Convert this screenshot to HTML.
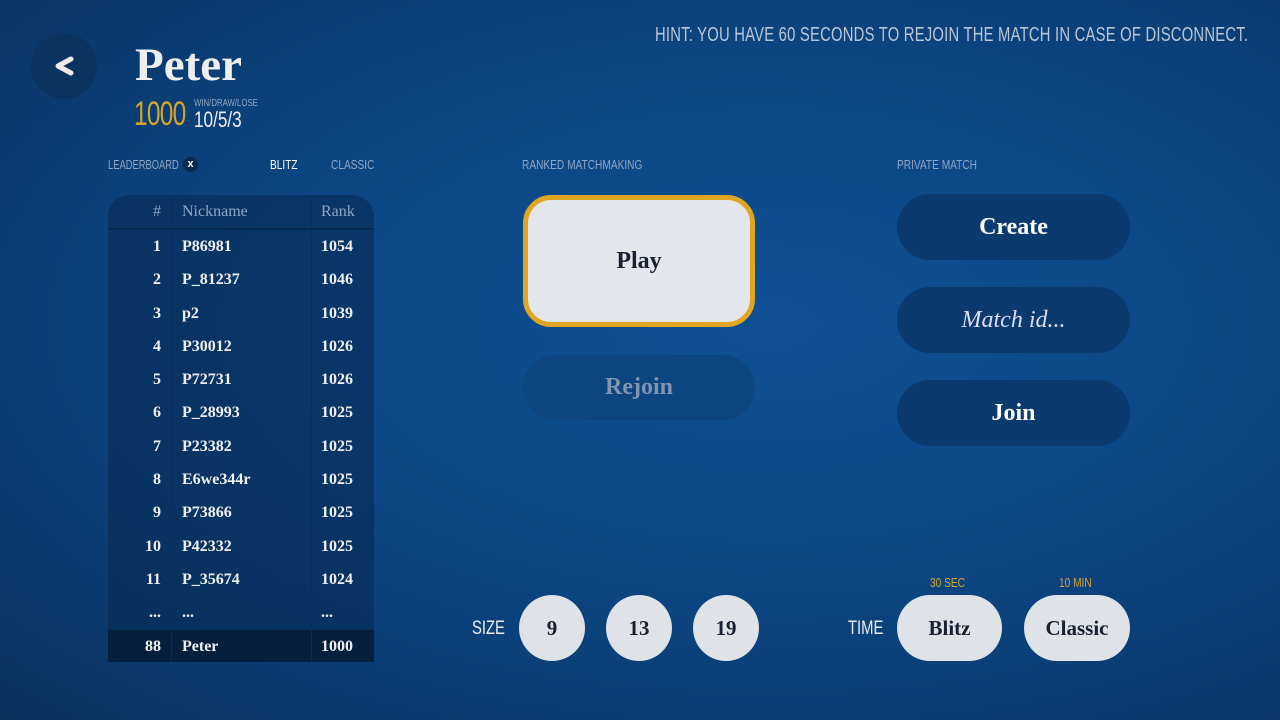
<!DOCTYPE html>
<html><head><style>
body{margin:0;width:1280px;height:720px;overflow:hidden;position:relative;
background:radial-gradient(ellipse at 60% 45%,#0f5095 0%,#0c4683 45%,#0a3a6e 80%,#08315c 100%);
font-family:"Liberation Serif",serif;color:#f0f0f0}
.a{position:absolute;white-space:nowrap}
.cond{font-family:"Liberation Sans Narrow","Liberation Sans",sans-serif;transform:scaleX(.78);transform-origin:left}
.small{font-size:13px;color:#8ea6c4}
.btn{position:absolute;border-radius:33px;background:#0a3a6e;display:flex;align-items:center;justify-content:center;font-weight:bold;font-size:24px;color:#fff}
.circ{position:absolute;width:66px;height:66px;border-radius:50%;background:#dfe3e8;color:#1a2030;display:flex;align-items:center;justify-content:center;font-weight:bold;font-size:21px;top:595px}
table{border-collapse:collapse;width:266px}
td{height:33.3px;font-weight:bold;font-size:16px;padding:0;border-left:1px solid #0a2e55}
td:first-child{border-left:none;text-align:right;padding-right:10px;width:53px}
td:nth-child(2){padding-left:10px;width:129px}
td:nth-child(3){padding-left:9px}
</style></head><body>
<div class="a" style="left:31px;top:33px;width:66px;height:66px;border-radius:50%;background:#0a335f"></div>
<svg class="a" style="left:52px;top:54px" width="24" height="24"><path d="M19 5 L6 12 L19 19" stroke="#f0eaea" stroke-width="5" fill="none" stroke-linejoin="round" stroke-linecap="round"/></svg>
<div class="a" style="left:135px;top:38px;font-size:47px;font-weight:bold;color:#eee">Peter</div>
<div class="a cond" style="left:134px;top:95px;font-size:34px;color:#d4a52a;letter-spacing:-1px;transform:scaleX(.72)">1000</div>
<div class="a cond" style="left:194px;top:98px;font-size:10px;color:#8ea6c4">WIN/DRAW/LOSE</div>
<div class="a cond" style="left:194px;top:107px;font-size:22px;color:#eee">10/5/3</div>
<div class="a cond" style="left:655px;top:24px;font-size:20px;color:#b9c6d6;letter-spacing:.3px;transform:scaleX(.74)">HINT: YOU HAVE 60 SECONDS TO REJOIN THE MATCH IN CASE OF DISCONNECT.</div>
<div class="a cond small" style="left:108px;top:157px;transform:scaleX(.72)">LEADERBOARD</div>
<div class="a" style="left:183px;top:157px;width:15px;height:15px;border-radius:50%;background:#0a2a4e;color:#fff;font:bold 11px 'Liberation Sans';text-align:center;line-height:15px">x</div>
<div class="a cond small" style="left:270px;top:157px;color:#fff">BLITZ</div>
<div class="a cond small" style="left:331px;top:157px">CLASSIC</div>
<div class="a cond small" style="left:522px;top:157px">RANKED MATCHMAKING</div>
<div class="a cond small" style="left:897px;top:157px">PRIVATE MATCH</div>
<div class="a" style="left:108px;top:195px;width:266px;height:467px;background:rgba(8,40,80,.55);border-radius:22px 22px 0 0;overflow:hidden">
<table>
<tr style="color:#8ea6c4;border-bottom:2px solid #082a50"><td style="font-weight:normal">#</td><td style="font-weight:normal">Nickname</td><td style="font-weight:normal">Rank</td></tr>
<tr><td>1</td><td>P86981</td><td>1054</td></tr>
<tr><td>2</td><td>P_81237</td><td>1046</td></tr>
<tr><td>3</td><td>p2</td><td>1039</td></tr>
<tr><td>4</td><td>P30012</td><td>1026</td></tr>
<tr><td>5</td><td>P72731</td><td>1026</td></tr>
<tr><td>6</td><td>P_28993</td><td>1025</td></tr>
<tr><td>7</td><td>P23382</td><td>1025</td></tr>
<tr><td>8</td><td>E6we344r</td><td>1025</td></tr>
<tr><td>9</td><td>P73866</td><td>1025</td></tr>
<tr><td>10</td><td>P42332</td><td>1025</td></tr>
<tr><td>11</td><td>P_35674</td><td>1024</td></tr>
<tr><td>...</td><td>...</td><td>...</td></tr>
<tr style="background:#061f3d"><td>88</td><td>Peter</td><td>1000</td></tr>
</table></div>
<div class="btn" style="left:523px;top:195px;width:222px;height:122px;border:5px solid #e0a621;border-radius:28px;background:#e3e7ec;color:#1a2030">Play</div>
<div class="btn" style="left:523px;top:355px;width:232px;height:65px;background:#0d4580;color:#7f95b0">Rejoin</div>
<div class="btn" style="left:897px;top:194px;width:233px;height:66px">Create</div>
<div class="btn" style="left:897px;top:287px;width:233px;height:66px;font-weight:normal;font-style:italic;color:#dde">Match id...</div>
<div class="btn" style="left:897px;top:380px;width:233px;height:66px">Join</div>
<div class="a cond" style="left:472px;top:618px;font-size:19px;color:#eee">SIZE</div>
<div class="circ" style="left:519px">9</div>
<div class="circ" style="left:606px">13</div>
<div class="circ" style="left:693px">19</div>
<div class="a cond" style="left:848px;top:618px;font-size:19px;color:#eee">TIME</div>
<div class="a cond" style="left:930px;top:575px;font-size:13px;color:#d4a52a">30 SEC</div>
<div class="a cond" style="left:1059px;top:575px;font-size:13px;color:#d4a52a">10 MIN</div>
<div class="circ" style="left:897px;width:105px;border-radius:33px">Blitz</div>
<div class="circ" style="left:1024px;width:106px;border-radius:33px">Classic</div>
</body></html>
